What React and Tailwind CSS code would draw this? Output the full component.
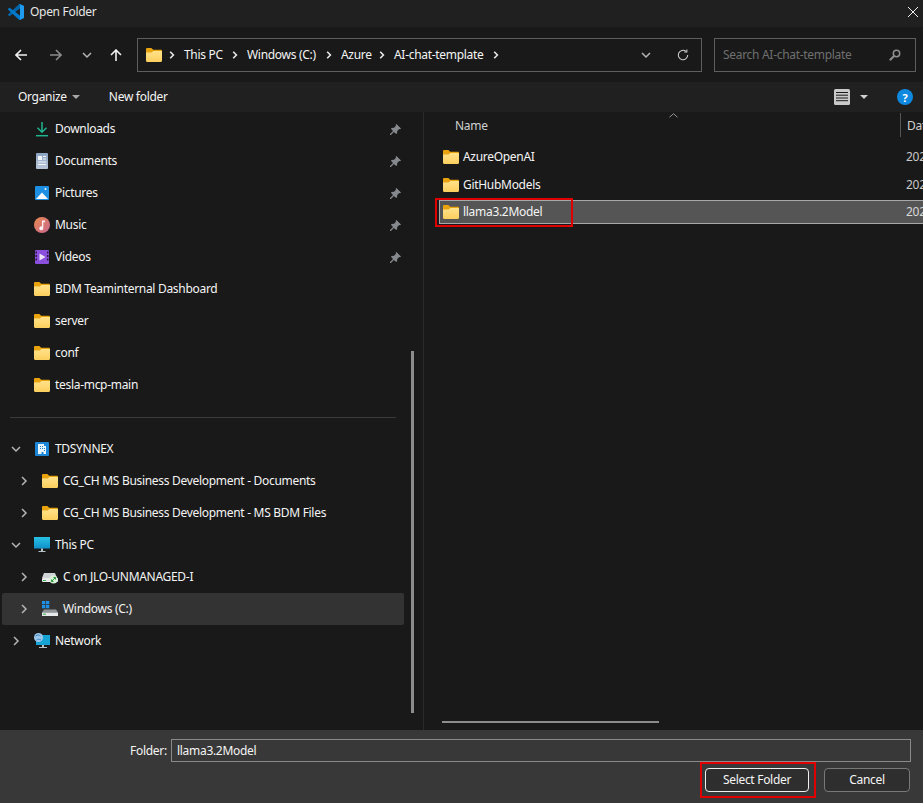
const Folder = ({ className = "" }) => (
  <svg viewBox="0 0 16 14" className={`w-4 h-[14px] shrink-0 ${className}`}>
    <defs>
      <linearGradient id="fg" x1="0" y1="0" x2="0" y2="1">
        <stop offset="0" stopColor="#ffe28a" />
        <stop offset="1" stopColor="#fccf5e" />
      </linearGradient>
    </defs>
    <path d="M0 1.2C0 .5.5 0 1.2 0h4.2l1.8 1.8h7.6c.7 0 1.2.5 1.2 1.2v3H0z" fill="#e9a30f" />
    <path d="M0 4.4h5.6l1.8-1.4H16v9.8c0 .7-.5 1.2-1.2 1.2H1.2C.5 14 0 13.5 0 12.8z" fill="url(#fg)" />
  </svg>
);

const Chevron = ({ dir = "right", className = "" }) => (
  <svg viewBox="0 0 10 10" className={`w-[10px] h-[10px] shrink-0 ${className}`} fill="none" stroke="#b5b5b5" strokeWidth="1.5">
    <path d={dir === "right" ? "M3 1l4 4-4 4" : "M1 3l4 4 4-4"} />
  </svg>
);

const Crumb = () => (
  <svg viewBox="0 0 6 8" className="w-[6px] h-2 shrink-0" fill="none" stroke="#e8e8e8" strokeWidth="1.6">
    <path d="M1.2 .8 4.4 4 1.2 7.2" />
  </svg>
);

const Pin = () => (
  <svg viewBox="0 0 12 12" className="w-[11px] h-[11px] shrink-0" fill="#85888c">
    <path d="M7 0l5 5-1 .8-.9-.3-2.4 2.4.2 2L6.700 11 4.300 8.700 1 12l-1 0 0-1 3.300-3.300L1 5.300l1.100-1.200 2 .2L6.500 1.900 6.200.9z" />
  </svg>
);

const Arrow = ({ color, rotate = "" }) => (
  <svg viewBox="0 0 12 12" className={`w-3 h-3 shrink-0 ${rotate}`} fill="none" stroke={color} strokeWidth="1.6">
    <path d="M12 6H1M6 1 1 6l5 5" />
  </svg>
);

const VsCode = () => (
  <svg viewBox="0 0 100 100" className="w-4 h-4 shrink-0">
    <path d="M96.4614 10.7962L75.8569 0.875542C73.4719 -0.272773 70.6217 0.211611 68.75 2.08333L1.29858 63.5832C-0.515693 65.2373 -0.513607 68.0937 1.30308 69.7452L6.81272 74.754C8.29793 76.1042 10.5347 76.2036 12.1338 74.9905L93.3609 13.3699C96.086 11.3026 100 13.2462 100 16.6667V16.4275C100 14.0265 98.6246 11.8378 96.4614 10.7962Z" fill="#0065A9" />
    <path d="M96.4614 89.2038L75.8569 99.1245C73.4719 100.273 70.6217 99.7884 68.75 97.9167L1.29858 36.4168C-0.515693 34.7627 -0.513607 31.9063 1.30308 30.2548L6.81272 25.246C8.29793 23.8958 10.5347 23.7964 12.1338 25.0095L93.3609 86.6301C96.086 88.6974 100 86.7538 100 83.3333V83.5725C100 85.9735 98.6246 88.1622 96.4614 89.2038Z" fill="#007ACC" />
    <path d="M75.8578 99.1263C73.4721 100.274 70.6219 99.7885 68.75 97.9166C71.0564 100.223 75 98.5895 75 95.3278V4.67213C75 1.41039 71.0564 -0.223106 68.75 2.08329C70.6219 0.211402 73.4721 -0.273666 75.8578 0.873633L96.4587 10.7807C98.6234 11.8217 100 14.0112 100 16.4132V83.5871C100 85.9891 98.6234 88.1786 96.4586 89.2196L75.8578 99.1263Z" fill="#1F9CF0" />
  </svg>
);

const IconDownload = () => (
  <svg viewBox="0 0 16 16" className="w-4 h-4" fill="none" stroke="#1fb58f" strokeWidth="1.5">
    <path d="M8 1v10M3.500 6.800 8 11.300l4.500-4.500" />
    <path d="M2 14.700h12" />
  </svg>
);
const IconDoc = () => (
  <svg viewBox="0 0 16 16" className="w-4 h-4">
    <defs><linearGradient id="dg" x1="0" y1="0" x2="0" y2="1"><stop offset="0" stopColor="#8ba3c2" /><stop offset="1" stopColor="#b9c6d8" /></linearGradient></defs>
    <rect x="2" y="0" width="12" height="16" rx="1" fill="url(#dg)" />
    <path d="M4 3h4v4H4zM9 3h3v1H9zM9 5.500h3v1H9zM4 8.500h8v1H4zM4 11h8v1H4z" fill="#f2f5f9" />
  </svg>
);
const IconPic = () => (
  <svg viewBox="0 0 16 16" className="w-4 h-4">
    <rect x="1" y="1" width="14" height="14" rx="1" fill="#1c8fe3" />
    <path d="M2 14 8 7.500 14 14z" fill="#f4f8fc" />
    <circle cx="11.500" cy="4" r="1" fill="#f4f8fc" />
  </svg>
);
const IconMusic = () => (
  <svg viewBox="0 0 16 16" className="w-4 h-4">
    <defs><linearGradient id="mg" x1="0" y1="0" x2="1" y2="1"><stop offset="0" stopColor="#e8894f" /><stop offset="1" stopColor="#c9668f" /></linearGradient></defs>
    <circle cx="8" cy="8" r="8" fill="url(#mg)" />
    <path d="M8 3.500h3v1.700H9.300v6a2 2 0 1 1-1.300-1.800z" fill="#fbeef0" />
  </svg>
);
const IconVideo = () => (
  <svg viewBox="0 0 16 16" className="w-4 h-4">
    <rect x="1" y="1" width="14" height="14" rx="1" fill="#8a4fdc" />
    <path d="M1.500 2.500h1.500v2H1.500zM1.500 6h1.500v2H1.500zM1.500 9.500h1.500v2H1.500zM13 2.500h1.500v2H13zM13 6h1.500v2H13zM13 9.500h1.500v2H13z" fill="#2a1a44" />
    <path d="M5.500 4.500 11.500 8l-6 3.500z" fill="#ece2fa" />
  </svg>
);
const IconOrg = () => (
  <svg viewBox="0 0 16 16" className="w-4 h-4">
    <rect x="1" y="1" width="14" height="14" rx="1" fill="#1b86d8" />
    <path d="M5 3h5v2h2v8H9.500v-2h-2v2H4V3z" fill="#e8f4fd" />
    <path d="M6 5h1v1H6zM8 5h1v1H8zM6 7h1v1H6zM8 7h1v1H8zM10 7h1v1h-1zM10 9h1v1h-1z" fill="#1b86d8" />
  </svg>
);
const IconPC = () => (
  <svg viewBox="0 0 16 16" className="w-4 h-4">
    <defs><linearGradient id="pg" x1="0" y1="0" x2="0" y2="1"><stop offset="0" stopColor="#28c2e6" /><stop offset="1" stopColor="#0f8fc9" /></linearGradient></defs>
    <rect x="0" y="0" width="16" height="11.500" fill="url(#pg)" />
    <path d="M7 11.500h2v2.500H7zM4.500 14h7v1h-7z" fill="#b8c2c9" />
  </svg>
);
const IconNetDrive = () => (
  <svg viewBox="0 0 16 16" className="w-4 h-4">
    <path d="M2 4h11l2 5H0z" fill="#cfd3d6" />
    <rect x="0" y="9" width="16" height="4" rx="1" fill="#e9ebed" />
    <rect x="1" y="11" width="3" height="1" fill="#35b24a" />
    <circle cx="11.500" cy="10.500" r="4" fill="#d9f0d8" />
    <path d="M9.500 12.500l4-4M11.500 8.500h2v2M9.500 10.500v2h2" stroke="#2c9a3f" strokeWidth="1" fill="none" />
  </svg>
);
const IconWinDrive = () => (
  <svg viewBox="0 0 16 16" className="w-4 h-4">
    <path d="M0 0h3.300v3.300H0zM4 0h3.300v3.300H4zM0 4h3.300v3.300H0zM4 4h3.300v3.300H4z" fill="#1d8fe6" />
    <path d="M2 8.500h12l2 3H0z" fill="#8f9498" />
    <rect x="0" y="11.500" width="16" height="3.500" fill="#e6e8ea" />
    <rect x="1" y="12.700" width="3" height="1" fill="#35b24a" />
  </svg>
);
const IconNetwork = () => (
  <svg viewBox="0 0 16 16" className="w-4 h-4">
    <rect x="2" y="2" width="14" height="10" fill="#16a3d6" />
    <path d="M8 12h2v2H8zM5 14h8v1H5z" fill="#b8c2c9" />
    <circle cx="4.500" cy="4.500" r="4.500" fill="#9cc7ea" />
    <path d="M1.500 3c2-1.500 4-1 5 0M2.500 7c1-1 3-1 4.500 0" stroke="#3d86c6" fill="none" />
  </svg>
);

const NavRow = ({ icon, label, pin, expander, indent, selected }) => (
  <div className={`h-8 flex items-center relative ${selected ? "bg-[#333333] rounded-[2px] ml-[2px] w-[402px]" : "w-[404px]"}`}>
    <div className={`shrink-0 flex items-center justify-center ${indent ? (selected ? "w-[40px] pl-[4px]" : "w-[42px] pl-[6px]") : "w-[34px] pr-[4px]"}`}>
      {expander && <Chevron dir={expander} className={indent ? "" : "ml-[2px]"} />}
    </div>
    <div className="w-4 h-4 flex items-center justify-center mr-[5px] shrink-0">{icon}</div>
    <span className="flex-1 whitespace-nowrap">{label}</span>
    {pin && <div className="mr-[3px]"><Pin /></div>}
  </div>
);

export default function App() {
  return (
    <div className="w-[923px] h-[803px] flex flex-col overflow-hidden bg-[#191919] text-[#f4f4f4] text-[12px] tracking-[-0.3px] font-['Noto_Sans',sans-serif] leading-none">
      <div className="h-[27px] bg-[#202020] flex items-center pl-2 pr-[3px] pb-[3px] shrink-0">
        <VsCode />
        <span className="ml-[6px] flex-1 text-[#e6e6e6]">Open Folder</span>
        <svg viewBox="0 0 10 10" className="w-[10px] h-[10px] mr-[2px]" fill="none" stroke="#f0f0f0" strokeWidth="1">
          <path d="M0 0l10 10M10 0 0 10" />
        </svg>
      </div>

      <div className="h-[55px] bg-[#191919] flex items-center shrink-0">
        <div className="w-[137px] flex items-center shrink-0 pl-[15px]">
          <Arrow color="#f0f0f0" />
          <div className="ml-[23px]"><Arrow color="#8a8a8a" rotate="rotate-180" /></div>
          <Chevron dir="down" className="ml-[20px]" />
          <div className="ml-[18px]"><Arrow color="#f0f0f0" rotate="rotate-90" /></div>
        </div>
        <div className="w-[565px] h-[34px] border border-[#5e5e5e] flex items-center pl-2 bg-[#191919] shrink-0">
          <Folder />
          <div className="ml-[7px]"><Crumb /></div>
          <span className="ml-[9px] w-[48px]">This PC</span>
          <Crumb />
          <span className="ml-[9px] w-[79px] whitespace-nowrap">Windows (C:)</span>
          <Crumb />
          <span className="ml-[9px] w-[38px]">Azure</span>
          <Crumb />
          <span className="ml-[9px] w-[99px] whitespace-nowrap">AI-chat-template</span>
          <Crumb />
          <div className="ml-[142px]"><Chevron dir="down" /></div>
          <svg viewBox="0 0 14 14" className="w-3 h-3 ml-[26px]" fill="none" stroke="#d0d0d0" strokeWidth="1.200">
            <path d="M12.500 7A5.500 5.500 0 1 1 10.500 2.800" />
            <path d="M11.500 .5v3h-3" />
          </svg>
        </div>
        <div className="w-[202px] h-[34px] ml-3 border border-[#5e5e5e] flex items-center pl-2 pr-[14px] shrink-0">
          <span className="flex-1 text-[#6f6f6f] whitespace-nowrap">Search AI-chat-template</span>
          <svg viewBox="0 0 12 12" className="w-3 h-3" fill="none" stroke="#8e8e8e" strokeWidth="1.500">
            <circle cx="7.500" cy="4.500" r="3.200" />
            <path d="M5 7 .8 11.200" strokeWidth="2" />
          </svg>
        </div>
      </div>

      <div className="h-[30px] bg-[#202020] flex items-center pl-[18px] shrink-0">
        <span>Organize</span>
        <svg viewBox="0 0 8 4" className="w-2 h-1 ml-[5px]" fill="#a8a8a8"><path d="M0 0h8L4 4z" /></svg>
        <span className="ml-[29px]">New folder</span>
        <div className="flex-1" />
        <svg viewBox="0 0 16 16" className="w-4 h-4"><rect width="16" height="16" rx="1.500" fill="#c9c9c9" /><path d="M2 3.500h12M2 6.200h12M2 9h12M2 11.700h12" stroke="#1a1a1a" strokeWidth="1" /></svg>
        <svg viewBox="0 0 8 4" className="w-2 h-1 ml-[10px]" fill="#d0d0d0"><path d="M0 0h8L4 4z" /></svg>
        <div className="ml-[29px] mr-[10px] w-4 h-4 rounded-full bg-[#0f88e0] flex items-center justify-center text-white text-[11px] font-bold">?</div>
      </div>

      <div className="flex-1 flex min-h-0 bg-[#191919]">
        <div className="w-[424px] shrink-0 flex border-r border-[#2a2a2a] pt-px relative">
          <div className="w-[404px] shrink-0 flex flex-col">
            <NavRow icon={<IconDownload />} label="Downloads" pin />
            <NavRow icon={<IconDoc />} label="Documents" pin />
            <NavRow icon={<IconPic />} label="Pictures" pin />
            <NavRow icon={<IconMusic />} label="Music" pin />
            <NavRow icon={<IconVideo />} label="Videos" pin />
            <NavRow icon={<Folder />} label="BDM Teaminternal Dashboard" />
            <NavRow icon={<Folder />} label="server" />
            <NavRow icon={<Folder />} label="conf" />
            <NavRow icon={<Folder />} label="tesla-mcp-main" />
            <div className="h-8 flex items-center pl-[10px]"><div className="h-px w-[386px] bg-[#3a3a3a]" /></div>
            <NavRow icon={<IconOrg />} label="TDSYNNEX" expander="down" />
            <NavRow icon={<Folder />} label="CG_CH MS Business Development - Documents" expander="right" indent />
            <NavRow icon={<Folder />} label="CG_CH MS Business Development - MS BDM Files" expander="right" indent />
            <NavRow icon={<IconPC />} label="This PC" expander="down" />
            <NavRow icon={<IconNetDrive />} label="C on JLO-UNMANAGED-I" expander="right" indent />
            <NavRow icon={<IconWinDrive />} label="Windows (C:)" expander="right" indent selected />
            <NavRow icon={<IconNetwork />} label="Network" expander="right" />
          </div>
          <div className="absolute left-[411px] top-[239px] w-[3px] h-[362px] bg-[#8c8c8c]" />
        </div>

        <div className="flex-1 min-w-0 flex flex-col relative">
          <div className="h-[31px] flex items-center relative shrink-0 pl-[31px] pb-[3px] text-[#d0d0d0]">
            <span>Name</span>
            <svg viewBox="0 0 10 5" className="absolute left-[245px] top-[1px] w-[9px] h-[5px]" fill="none" stroke="#a0a0a0"><path d="M.5 4.500 5 .5l4.500 4" /></svg>
            <div className="absolute left-[476px] top-px w-px h-6 bg-[#555555]" />
            <span className="absolute left-[483px]">Dat</span>
          </div>
          <div className="h-[28px] flex items-center pl-[19px] shrink-0 overflow-hidden">
            <Folder /><span className="ml-[4px] flex-1">AzureOpenAI</span><span className="text-[#c8c8c8] w-[17px]">202</span>
          </div>
          <div className="h-[28px] flex items-center pl-[19px] shrink-0 overflow-hidden">
            <Folder /><span className="ml-[4px] flex-1">GitHubModels</span><span className="text-[#c8c8c8] w-[17px]">202</span>
          </div>
          <div className="h-6 ml-[15px] mt-px flex items-center pl-[3px] bg-[#555555] border border-[#a8a8a8] border-r-0 shrink-0 overflow-hidden relative">
            <Folder /><span className="ml-[4px] flex-1">llama3.2Model</span><span className="text-[#d8d8d8] w-[17px]">202</span>
          </div>
          <div className="absolute left-[11px] top-[86px] w-[138px] h-[29px] border-2 border-[#e00000]" />
          <div className="absolute left-[18px] top-[609px] w-[217px] h-[2px] bg-[#8c8c8c]" />
        </div>
      </div>

      <div className="h-[73px] bg-[#383838] shrink-0 flex flex-col pt-[9px] relative">
        <div className="flex items-center pl-[130px]">
          <span className="w-[41px]">Folder:</span>
          <div className="w-[740px] h-[23px] border border-[#8a8a8a] flex items-center pl-[5px]">llama3.2Model</div>
        </div>
        <div className="flex justify-end gap-[15px] mt-[6px] pr-[13px]">
          <div className="w-[104px] h-6 rounded-[4px] border border-[#f0f0f0] bg-[#2e2e2e] flex items-center justify-center">Select Folder</div>
          <div className="w-[86px] h-6 rounded-[4px] border border-[#787878] bg-[#2e2e2e] flex items-center justify-center">Cancel</div>
        </div>
        <div className="absolute left-[700px] top-[32px] w-[116px] h-[36px] border-2 border-[#e00000]" />
      </div>
    </div>
  );
}
